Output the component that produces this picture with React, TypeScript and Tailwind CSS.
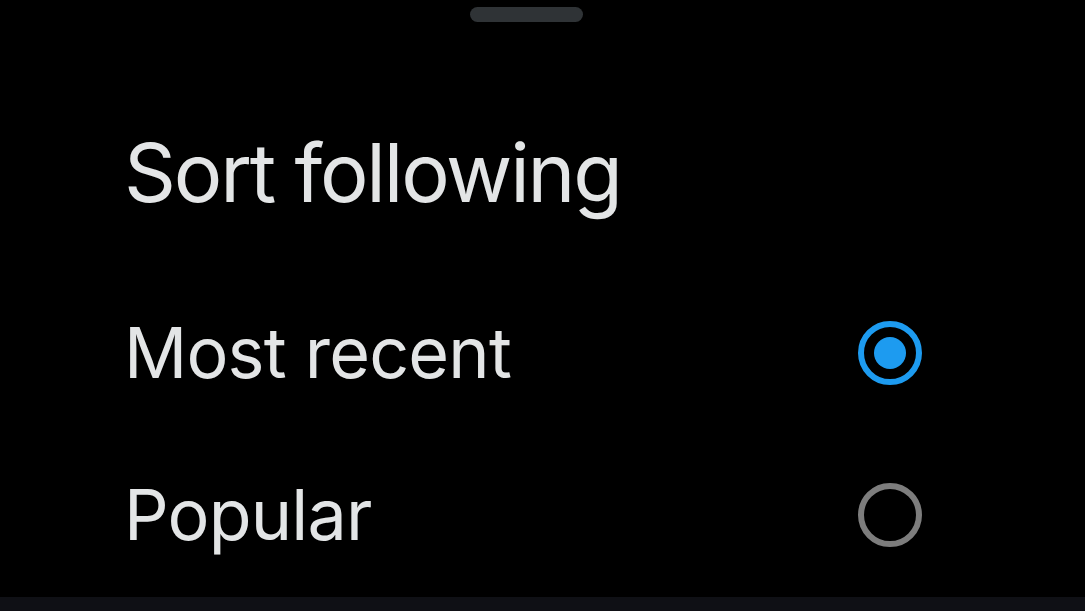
export default function App() {
  const options = [
    { label: "Most recent", selected: true },
    { label: "Popular", selected: false },
  ];

  return (
    <div
      className="w-[1085px] h-[611px] bg-black flex flex-col overflow-hidden"
      style={{ fontFamily: "Inter, 'Noto Sans', sans-serif" }}
    >
      <div className="flex justify-center pt-[7px] pr-[32px]">
        <div className="w-[113px] h-[15px] rounded-full bg-[#2f3336]" />
      </div>

      <div className="flex-1 flex flex-col pl-[124px] pr-[163px]">
        <h1 className="mt-[101px] h-[100px] text-[81px] leading-[100px] text-[#e3e5e6] font-normal tracking-[-2.2px]">
          Sort following
        </h1>

        <div className="mt-[80px] flex flex-col gap-[62px]">
          {options.map((o) => (
            <div
              key={o.label}
              className="h-[100px] flex items-center justify-between"
            >
              <span className="text-[70px] leading-[100px] text-[#e3e5e6] tracking-[-0.8px]">
                {o.label}
              </span>
              {o.selected ? (
                <div className="w-[64px] h-[64px] rounded-full border-[6px] border-[#1d9bf0] flex items-center justify-center">
                  <div className="w-[32px] h-[32px] rounded-full bg-[#1d9bf0]" />
                </div>
              ) : (
                <div className="w-[64px] h-[64px] rounded-full border-[6px] border-[#7d7d7d]" />
              )}
            </div>
          ))}
        </div>
      </div>

      <div className="h-[14px] bg-[#0f1015]" />
    </div>
  );
}
